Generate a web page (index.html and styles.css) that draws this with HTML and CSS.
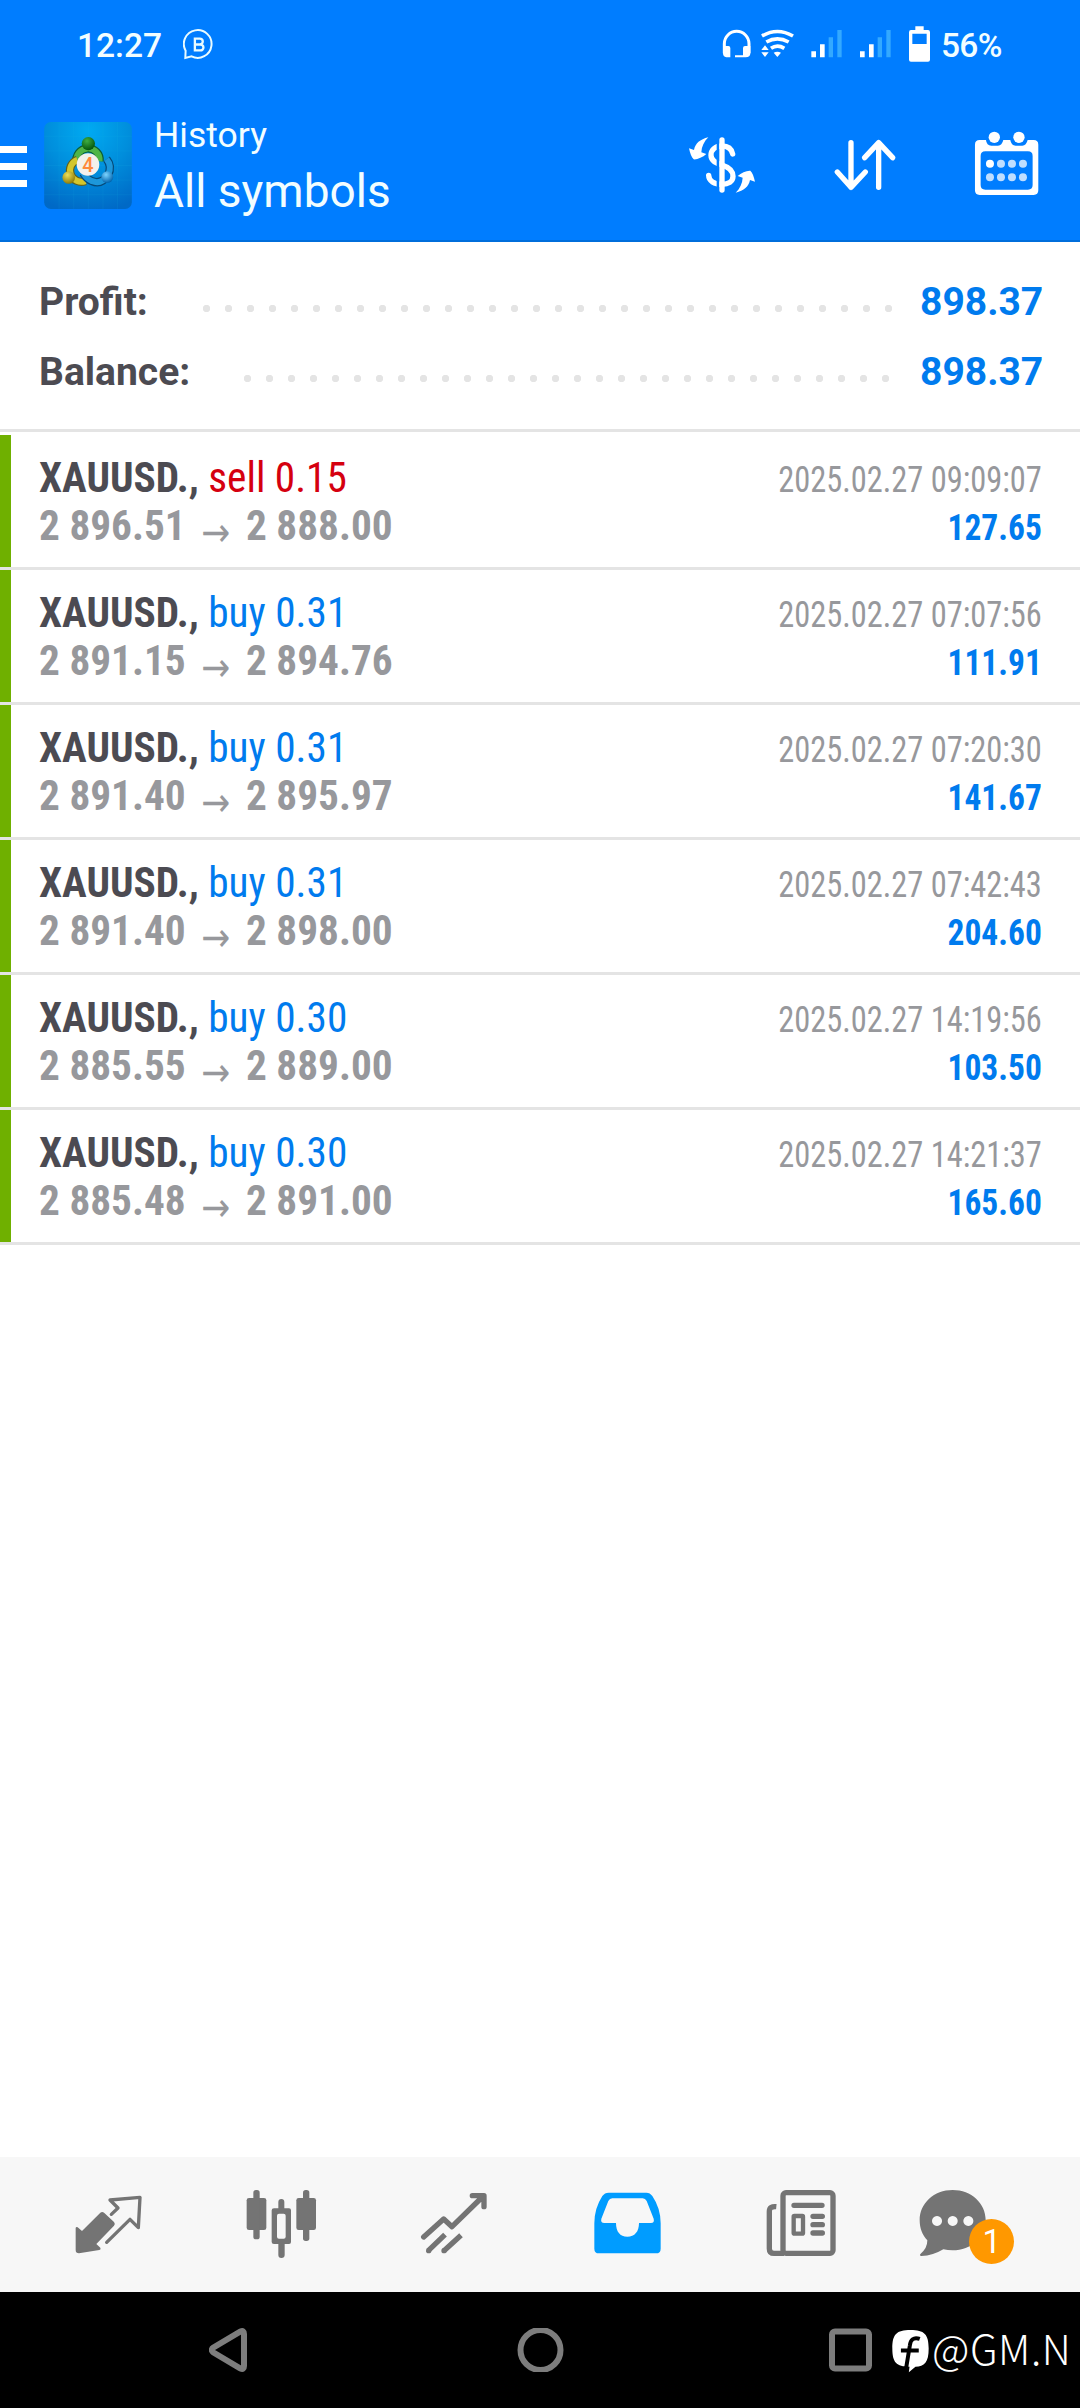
FILE: index.html
```
<!DOCTYPE html>
<html lang="en">
  <head>
    <meta charset="utf-8" />
    <title>History</title>
    <link rel="stylesheet" href="styles.css" />
  </head>
  <body>
    <header class="top">
      <div class="status-bar">
        <span class="time">12:27</span>
        <svg class="chat-b" viewBox="548 86 94 94">
          <path d="M555 174 L556 152 A42 42 0 1 1 574 169 Z" />
          <path class="b" d="M584 115 H599 A9 9 0 0 1 599 133 H584 Z M584 133 H601 A9 9 0 0 1 601 151 H584 Z" />
        </svg>
        <svg class="status-icons" viewBox="186 75 627 114">
          <!-- headphones -->
          <path class="line" d="M193 160 V131 A37 37 0 0 1 267 131 V160" />
          <path d="M189 138 H205 Q211 138 211 144 V172 H199 Q189 170 189 160 Z M271 138 H255 Q249 138 249 144 V166 H225 V172 H257 Q271 172 271 160 Z" />
          <!-- wifi -->
          <path class="line wave" d="M306 108 Q352 81 399 108 M319 126 Q352 107 386 126 M333 145 Q352 132 373 145" />
          <path d="M341 158 Q352 153 363 158 L352 171 Z M304 150 L315 136 L326 150 Z M304 157 H326 L315 171 Z" />
          <!-- signal -->
          <path d="M454 154 h14 v18 h-14 Z M480 133 h14 v39 h-14 Z M600 154 h14 v18 h-14 Z M627 133 h14 v39 h-14 Z" />
          <path class="dim" d="M506 112 h13 v60 h-13 Z M532 90 h13 v82 h-13 Z M653 112 h13 v60 h-13 Z M679 90 h13 v82 h-13 Z" />
          <!-- battery -->
          <path fill-rule="evenodd" d="M766 79 H791 V90 H804 Q810 90 810 97 V179 Q810 185 804 185 H753 Q747 185 747 179 V97 Q747 90 753 90 H766 Z M757 101 V132 H800 V101 Z" />
        </svg>
        <span class="battery">56%</span>
      </div>
      <div class="toolbar">
        <div class="menu"><i></i><i></i><i></i></div>
        <svg class="logo" viewBox="0 0 264 262">
          <defs>
            <radialGradient id="sky" cx="0.5" cy="0.1" r="0.95">
              <stop offset="0" stop-color="#00aaf2" />
              <stop offset="0.5" stop-color="#008edc" />
              <stop offset="1" stop-color="#0069c6" />
            </radialGradient>
            <radialGradient id="green" cx="0.4" cy="0.3" r="0.7">
              <stop offset="0" stop-color="#3fae43" />
              <stop offset="1" stop-color="#04560d" />
            </radialGradient>
            <radialGradient id="yellow" cx="0.4" cy="0.3" r="0.7">
              <stop offset="0" stop-color="#eee05a" />
              <stop offset="1" stop-color="#8e7c08" />
            </radialGradient>
            <radialGradient id="blue" cx="0.4" cy="0.3" r="0.7">
              <stop offset="0" stop-color="#7cd4ff" />
              <stop offset="1" stop-color="#0063ad" />
            </radialGradient>
          </defs>
          <rect width="264" height="262" rx="20" fill="url(#sky)" />
          <path d="M45 0 V262 M89 0 V262 M133 0 V262 M177 0 V262 M221 0 V262 M0 43 H264 M0 87 H264 M0 131 H264 M0 175 H264 M0 219 H264" stroke="#20c4ec" stroke-opacity="0.15" stroke-width="2" />
          <g fill="none" stroke-width="25">
            <path d="M98 122 A35 35 0 1 1 167 118" stroke="#0c5e35" />
            <path d="M98 122 A35 35 0 1 1 167 118" stroke="#4fb548" stroke-width="18" />
            <path d="M100 114 A34 34 0 1 0 124 178" stroke="#626019" />
            <path d="M100 114 A34 34 0 1 0 124 178" stroke="#d3c62c" stroke-width="18" />
            <path d="M188 112 Q206 134 192 160 Q172 190 144 178 Q128 172 118 154" stroke="#064a78" />
            <path d="M188 112 Q206 134 192 160 Q172 190 144 178 Q128 172 118 154" stroke="#1d97da" stroke-width="18" />
          </g>
          <circle cx="133" cy="65" r="20" fill="url(#green)" />
          <circle cx="74" cy="167" r="19" fill="url(#yellow)" />
          <circle cx="190" cy="166" r="18" fill="url(#blue)" />
          <circle cx="132" cy="128" r="34" fill="#f3f1ec" />
          <text x="132" y="150" text-anchor="middle" class="four">4</text>
        </svg>
        <div class="titles">
          <div class="title">History</div>
          <div class="subtitle">All symbols</div>
        </div>
        <svg class="actions" viewBox="84 390 1054 200">
          <!-- currency -->
          <path class="dollar" d="M218 462 C214 443 202 438 186 438 C165 438 153 450 153 466 C153 484 170 490 186 495 C205 501 219 510 219 529 C219 545 205 553 186 553 C163 553 146 543 146 526" />
          <path class="gap" d="M174 405 V585" />
          <path class="bar" d="M186 420 V570" />
          <path id="swap" d="M145 412 C120 418 106 430 102 450 L87 445 C90 460 95 472 101 478 C112 479 128 472 139 462 L124 457 C125 440 132 425 145 412 Z" />
          <use href="#swap" transform="rotate(180 186 495)" />
          <!-- sort -->
          <path class="arrow" d="M573 428 V562 M532 516 L573 562 L616 516 M656 562 V428 M614 473 L656 428 L698 473" />
          <!-- calendar -->
          <path fill-rule="evenodd" d="M959 420 H978 Q980 437 994 437 H1014 Q1026 437 1030 420 H1051 Q1054 437 1067 437 H1087 Q1099 437 1103 420 H1121 Q1135 420 1135 434 V571 Q1135 585 1121 585 H959 Q945 585 945 571 V434 Q945 420 959 420 Z M976 454 Q962 454 962 468 V555 Q962 569 976 569 H1104 Q1118 569 1118 555 V468 Q1118 454 1104 454 Z" />
          <circle cx="1003" cy="412" r="17" />
          <circle cx="1077" cy="412" r="17" />
          <circle cx="990" cy="491" r="12" />
          <g opacity="0.75">
            <circle cx="1023" cy="491" r="12" />
            <circle cx="1056" cy="491" r="12" />
            <circle cx="1089" cy="491" r="12" />
            <circle cx="990" cy="532" r="12" />
            <circle cx="1023" cy="532" r="12" />
            <circle cx="1056" cy="532" r="12" />
            <circle cx="1089" cy="532" r="12" />
          </g>
        </svg>
      </div>
    </header>

    <section class="summary">
      <div class="summary-row">
        <span>Profit:</span>
        <span class="dots dots-profit"></span>
        <span class="total">898.37</span>
      </div>
      <div class="summary-row">
        <span>Balance:</span>
        <span class="dots dots-balance"></span>
        <span class="total">898.37</span>
      </div>
    </section>

    <main class="deals">
      <div class="deal">
        <div class="deal-body">
          <div class="left">
            <p><b>XAUUSD.,</b> <span class="sell">sell 0.15</span></p>
            <p class="price">2 896.51 <span class="to">→</span> 2 888.00</p>
          </div>
          <div class="right">
            <p class="date">2025.02.27 09:09:07</p>
            <p class="profit">127.65</p>
          </div>
        </div>
      </div>
      <div class="deal">
        <div class="deal-body">
          <div class="left">
            <p><b>XAUUSD.,</b> <span class="buy">buy 0.31</span></p>
            <p class="price">2 891.15 <span class="to">→</span> 2 894.76</p>
          </div>
          <div class="right">
            <p class="date">2025.02.27 07:07:56</p>
            <p class="profit">111.91</p>
          </div>
        </div>
      </div>
      <div class="deal">
        <div class="deal-body">
          <div class="left">
            <p><b>XAUUSD.,</b> <span class="buy">buy 0.31</span></p>
            <p class="price">2 891.40 <span class="to">→</span> 2 895.97</p>
          </div>
          <div class="right">
            <p class="date">2025.02.27 07:20:30</p>
            <p class="profit">141.67</p>
          </div>
        </div>
      </div>
      <div class="deal">
        <div class="deal-body">
          <div class="left">
            <p><b>XAUUSD.,</b> <span class="buy">buy 0.31</span></p>
            <p class="price">2 891.40 <span class="to">→</span> 2 898.00</p>
          </div>
          <div class="right">
            <p class="date">2025.02.27 07:42:43</p>
            <p class="profit">204.60</p>
          </div>
        </div>
      </div>
      <div class="deal">
        <div class="deal-body">
          <div class="left">
            <p><b>XAUUSD.,</b> <span class="buy">buy 0.30</span></p>
            <p class="price">2 885.55 <span class="to">→</span> 2 889.00</p>
          </div>
          <div class="right">
            <p class="date">2025.02.27 14:19:56</p>
            <p class="profit">103.50</p>
          </div>
        </div>
      </div>
      <div class="deal">
        <div class="deal-body">
          <div class="left">
            <p><b>XAUUSD.,</b> <span class="buy">buy 0.30</span></p>
            <p class="price">2 885.48 <span class="to">→</span> 2 891.00</p>
          </div>
          <div class="right">
            <p class="date">2025.02.27 14:21:37</p>
            <p class="profit">165.60</p>
          </div>
        </div>
      </div>
    </main>

    <nav class="tabs">
      <!-- quotes -->
      <svg class="tab" viewBox="145 51 360 405">
        <path d="M227 263 Q229 259 233 262 L246 273 L301 218 Q307 214 313 219 L342 246 Q347 252 342 257 L289 312 L301 323 Q304 328 298 330 L237 340 Q227 340 227 330 Z" />
        <path class="line thin" d="M334 223 L354 204 L330 180 L420 172 L415 263 L390 238 L320 307" />
      </svg>
      <!-- charts -->
      <svg class="tab" viewBox="663 51 360 405">
        <rect x="739" y="174" width="59" height="96" rx="7" />
        <rect x="759" y="150" width="19" height="148" rx="8" />
        <rect x="888" y="174" width="59" height="96" rx="7" />
        <rect x="908" y="150" width="19" height="153" rx="8" />
        <path fill-rule="evenodd" d="M834 205 V186 Q834 177 843 177 Q852 177 852 186 V205 H866 Q872 205 872 211 V306 Q872 312 866 312 H853 V345 Q853 354 843 354 Q834 354 834 345 V312 H821 Q814 312 814 306 V211 Q814 205 821 205 Z M836 221 Q830 221 830 227 V290 Q830 296 836 296 H850 Q856 296 856 290 V227 Q856 221 850 221 Z" />
      </svg>
      <!-- trade -->
      <svg class="tab" viewBox="41 51 360 405">
        <path class="line" d="M132 291 L192 237 L217 260 L311 168 M278 167 H313 V200" />
        <path class="line butt" d="M146 332 L196 284 M193 332 L244 286" />
        <circle cx="147" cy="332" r="8" />
        <circle cx="193" cy="332" r="8" />
      </svg>
      <!-- history -->
      <svg class="tab active" viewBox="559 51 360 405">
        <path fill-rule="evenodd" d="M686 158 H799 Q810 158 817 168 Q842 205 842 250 V326 Q842 340 828 340 H657 Q643 340 643 326 V250 Q643 205 667 168 Q674 158 686 158 Z M697 175 Q689 175 685 183 L664 236 Q661 249 673 249 H708 C708 275 720 290 742 290 C764 290 777 275 777 249 H813 Q824 249 821 236 L800 183 Q796 175 788 175 Z" />
      </svg>
      <!-- news -->
      <svg class="tab" viewBox="118 51 360 405">
        <rect class="line" x="249" y="158" width="150" height="182" rx="9" />
        <path class="line butt" d="M229 200 Q208 198 208 214 V326 Q208 340 222 340 H252" />
        <path class="line" d="M282 196 H366 M339 229 H367 M339 254 H367 M339 279 H367" />
        <rect class="line medium" x="281" y="228" width="28" height="53" rx="2" />
      </svg>
      <div class="tab messages">
        <svg viewBox="635 51 360 405">
          <path fill-rule="evenodd" d="M759 150 C815 150 858 190 858 240 C858 292 815 331 759 331 Q744 331 731 328 Q700 347 665 348 Q658 346 663 341 Q683 325 683 301 C668 285 660 265 660 240 C660 190 703 150 759 150 Z M712 228 a15 15 0 1 0 0.1 0 Z M759 228 a15 15 0 1 0 0.1 0 Z M806 228 a15 15 0 1 0 0.1 0 Z" />
        </svg>
        <span class="badge">1</span>
      </div>
    </nav>

    <footer class="system-bar">
      <svg class="nav-keys" viewBox="0 0 663 44">
        <path d="M31.5 3.5 Q35 2 35 6 V38 Q35 42 31.5 40.5 L4.5 24.5 Q1 22 4.5 19.5 Z" />
        <circle cx="331.5" cy="22" r="20" />
        <rect x="623" y="3.5" width="37" height="37" rx="3" />
      </svg>
      <svg class="fb" viewBox="577 570 112 130">
        <path d="M633 570 C675 570 688 583 688 626 C688 668 675 681 648 681 L628 698 L630 681 C590 681 578 668 578 626 C578 583 590 570 633 570 Z" />
        <path class="f" d="M661 597 C642 590 633 600 631 617 L620 684 M604 632 H658" />
      </svg>
      <span class="handle">@GM.N</span>
    </footer>
  </body>
</html>
```

FILE: styles.css
```
* {
  box-sizing: border-box;
}
body {
  margin: 0;
  height: 2408px;
  display: flex;
  flex-direction: column;
  background-color: white;
  font-family: Roboto, "Liberation Sans", sans-serif;
  overflow: hidden;
}
p {
  margin: 0;
}
svg {
  display: block;
  flex: none;
}

/* header */
.top {
  height: 242px;
  background-color: #007dff;
  border-bottom: 2px solid #006edb;
  color: #f2fdff;
  fill: white;
}
.status-bar {
  height: 88px;
  display: flex;
  align-items: center;
  padding-left: 77px;
  font-size: 33.5px;
  font-weight: 500;
  line-height: 40px;
}
.time {
  width: 106px;
  padding-top: 3px;
}
.chat-b {
  width: 31px;
  height: 31px;
  fill: none;
  stroke: #e8fbff;
  stroke-width: 6;
}
.chat-b .b {
  stroke-width: 7;
}
.status-icons {
  width: 209px;
  height: 38px;
  margin-left: 508px;
}
.line {
  fill: none;
  stroke: white;
  stroke-width: 9;
}
.wave {
  stroke-width: 11;
}
.dim {
  fill: #33a9ff;
}
.battery {
  margin-left: 10px;
  padding-top: 3px;
  letter-spacing: -0.7px;
}
.toolbar {
  height: 152px;
  display: flex;
  align-items: flex-start;
}
.menu {
  width: 44px;
  padding-top: 58px;
}
.menu i {
  display: block;
  width: 27px;
  height: 7px;
  margin-bottom: 10px;
  background-color: white;
}
.logo {
  width: 88px;
  height: 87px;
  margin-top: 34px;
}
.four {
  font-size: 60px;
  font-weight: 500;
  fill: #ff8a3c;
}
.titles {
  width: 556px;
  padding: 24px 0 0 22px;
}
.title {
  font-size: 35.5px;
  line-height: 46px;
}
.subtitle {
  font-size: 46px;
  line-height: 66px;
}
.actions {
  width: 351.3px;
  height: 66.7px;
  margin-top: 42px;
}
.dollar,
.bar,
.arrow {
  fill: none;
  stroke: white;
  stroke-width: 16;
  stroke-linecap: round;
  stroke-linejoin: round;
}
.gap {
  stroke: #007dff;
  stroke-width: 8;
}

/* totals */
.summary {
  height: 190px;
  padding: 25px 40px 0 39px;
  border-bottom: 3px solid #e4e4e4;
}
.summary-row {
  display: flex;
  height: 70px;
  align-items: center;
  font-size: 39px;
  font-weight: bold;
  color: #4c4b52;
}
.total {
  width: 120px;
  text-align: right;
  color: #007bee;
}
.dots {
  height: 7px;
  margin: 12px 27px 0 auto;
  background-image: radial-gradient(circle at 3.5px 3.5px, #e4e4e4 3.4px, transparent 4px);
  background-size: 22px 7px;
}
.dots-profit {
  width: 690px;
}
.dots-balance {
  width: 646px;
  margin-right: 30px;
}

/* deals */
.deals {
  flex: 1;
  padding-top: 3px;
  font-family: "Roboto Condensed", Roboto, sans-serif;
  font-stretch: 75%;
}
.deal {
  height: 135px;
  border-bottom: 3px solid #e4e4e4;
}
.deal-body {
  height: 132px;
  display: flex;
  justify-content: space-between;
  padding: 18px 38px 0 28px;
  border-left: 11px solid #6fb000;
}
.left {
  font-size: 43px;
  line-height: 48px;
  color: #4c4b52;
  transform: scaleX(0.96);
  transform-origin: left;
}
.right {
  padding-top: 3px;
  font-size: 36px;
  line-height: 48px;
  text-align: right;
}
.right p {
  transform: scaleX(0.9);
  transform-origin: right;
}
.sell {
  color: #d5000f;
}
.buy {
  color: #007bee;
}
.price {
  font-weight: bold;
  color: #97989c;
}
.to {
  display: inline-flex;
  justify-content: center;
  width: 43px;
  font-family: "Noto Sans", "DejaVu Sans", sans-serif;
  font-size: 40px;
  font-weight: normal;
  line-height: 20px;
  vertical-align: -6px;
}
.date {
  color: #97989c;
}
.right .profit {
  font-weight: bold;
  color: #007bee;
  transform: scaleX(0.93);
}

/* bottom tabs */
.tabs {
  height: 135px;
  display: flex;
  padding: 0 22px;
  background-color: #f7f7f7;
  fill: #747474;
}
.tab {
  flex: 1;
  height: 135px;
}
.tab .line {
  stroke: #747474;
  stroke-width: 16;
  stroke-linecap: round;
  stroke-linejoin: round;
}
.tab .thin {
  stroke-width: 10;
}
.tab .medium {
  stroke-width: 13;
}
.tab .butt {
  stroke-linecap: butt;
}
.active {
  fill: #009cff;
}
.messages {
  position: relative;
}
.messages svg {
  width: 100%;
  height: 135px;
}
.badge {
  position: absolute;
  left: 84px;
  top: 62px;
  width: 45px;
  height: 45px;
  border-radius: 50%;
  background-color: #ff9800;
  color: white;
  font-size: 33px;
  line-height: 46px;
  text-align: center;
}

/* android bar */
.system-bar {
  height: 116px;
  display: flex;
  align-items: center;
  padding-left: 209px;
  background-color: black;
}
.nav-keys {
  width: 663px;
  height: 44px;
  fill: none;
  stroke: #7d7d7d;
  stroke-width: 6;
}
.fb {
  width: 37px;
  height: 43px;
  margin: 2px 0 0 20px;
  fill: white;
}
.f {
  fill: none;
  stroke: black;
  stroke-width: 12;
}
.handle {
  margin: -6px 0 0 3px;
  font-family: "Noto Sans CJK SC", "Noto Sans", sans-serif;
  font-weight: 300;
  font-size: 41px;
  line-height: 50px;
  letter-spacing: 0.6px;
  color: white;
}
```
